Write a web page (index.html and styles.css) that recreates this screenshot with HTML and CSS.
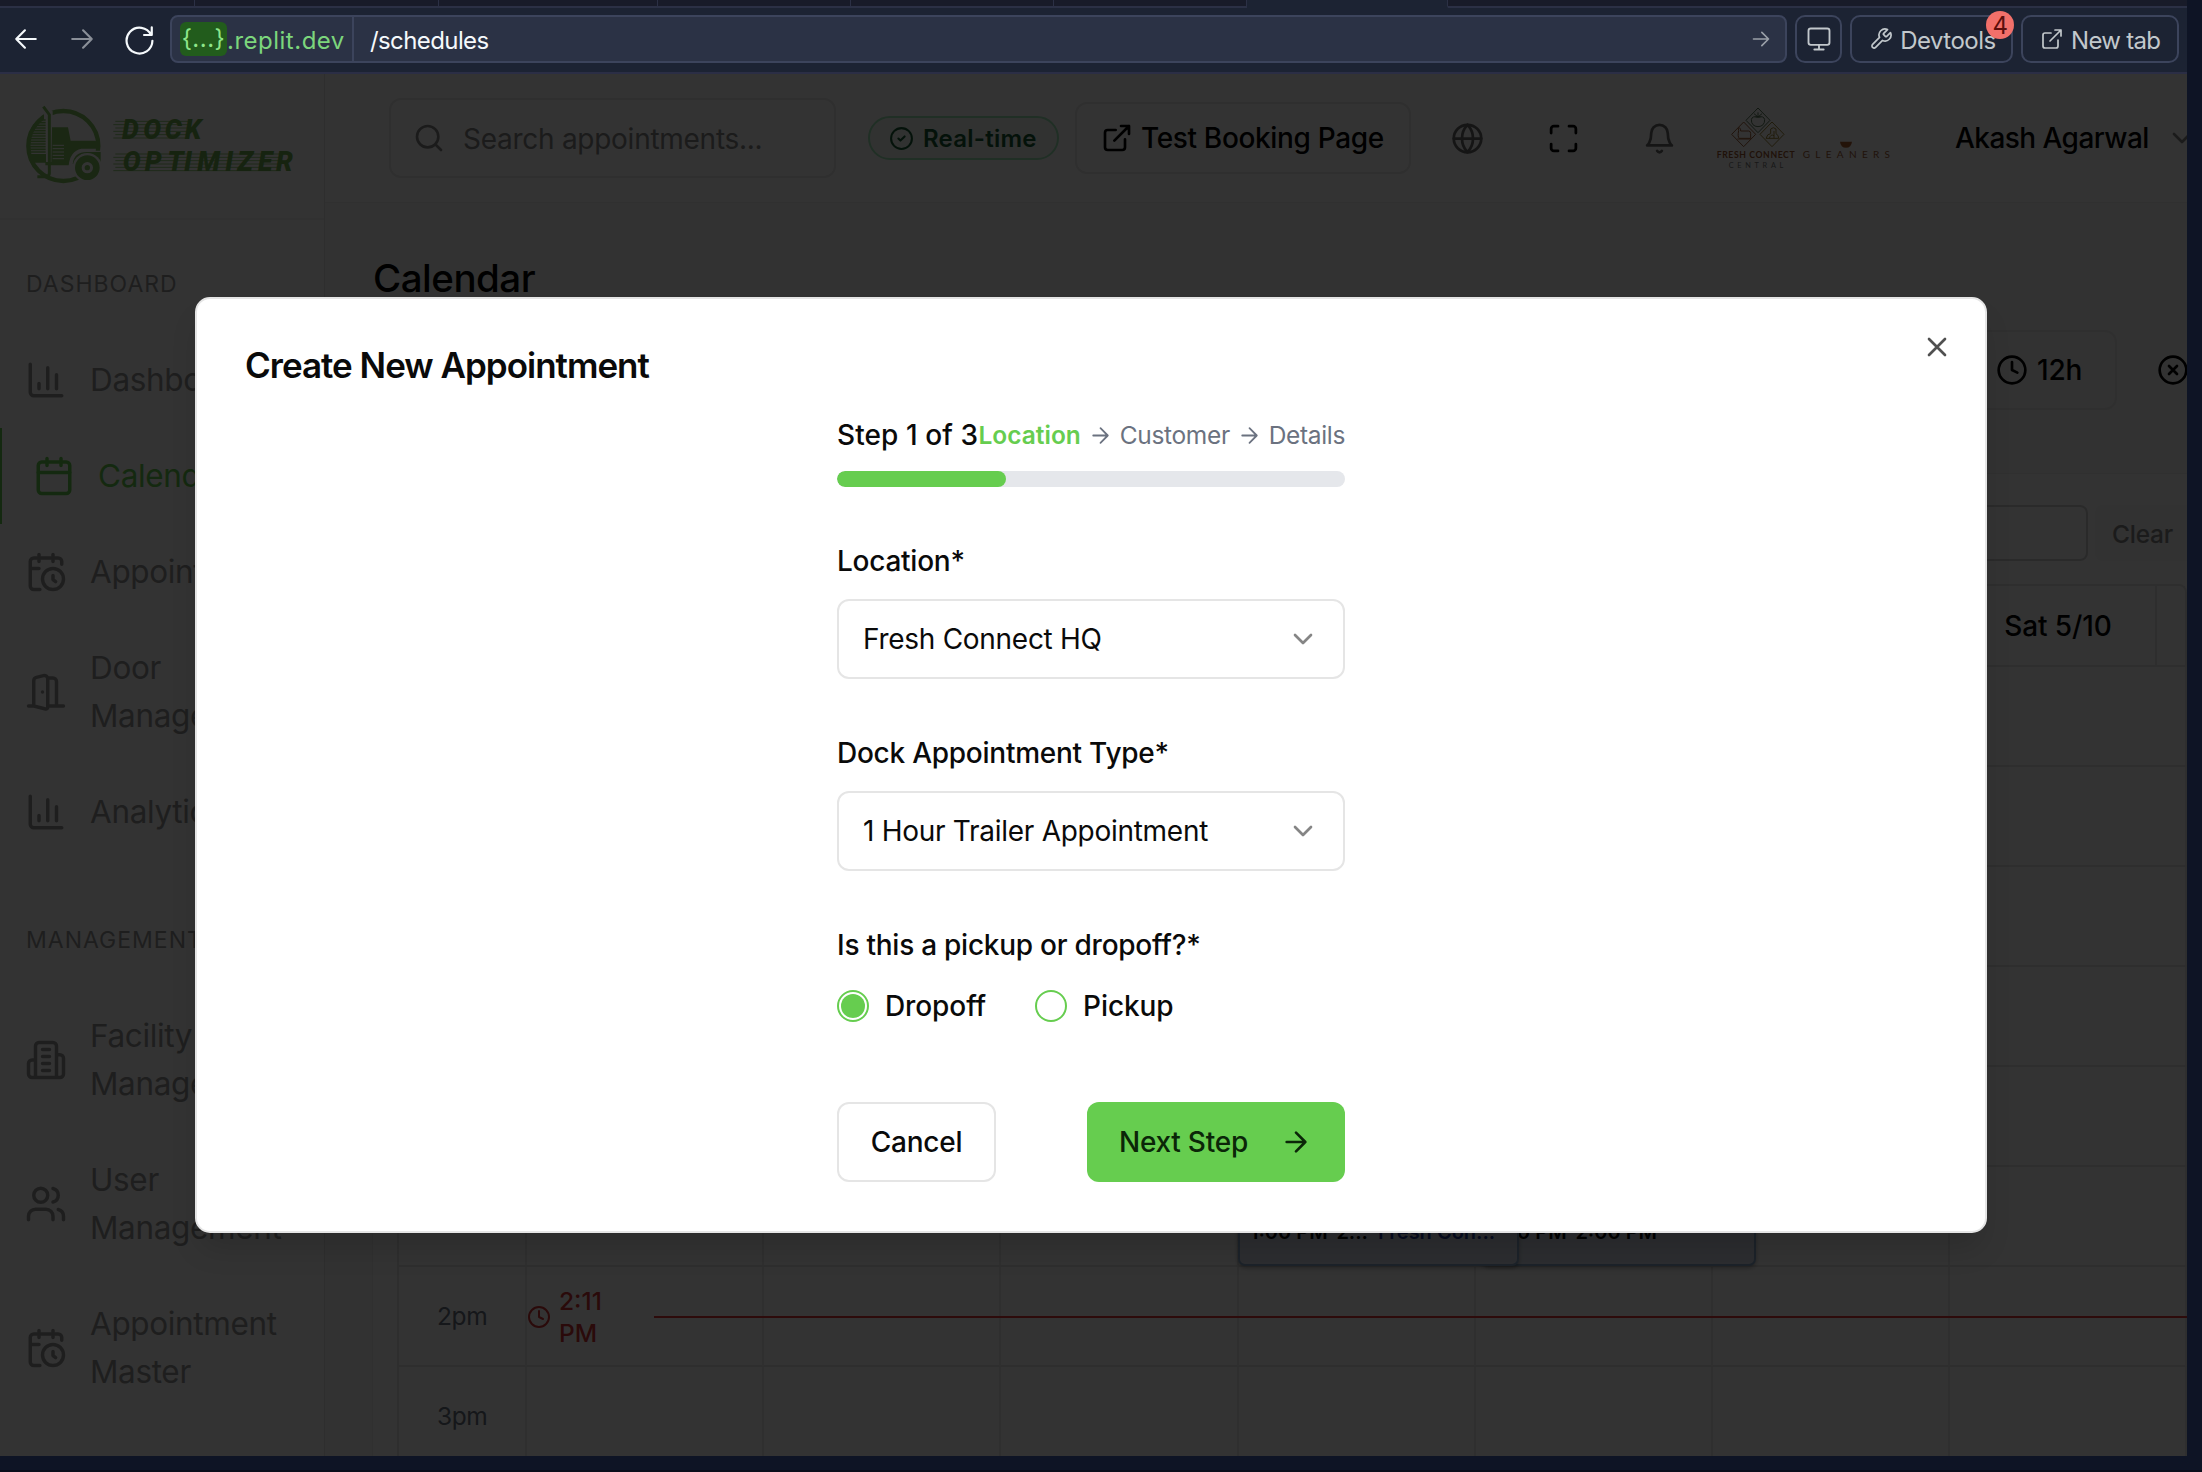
FILE: index.html
```html
<!DOCTYPE html>
<html lang="en">
<head>
<meta charset="utf-8">
<title>Dock Optimizer - Schedules</title>
<link rel="stylesheet" href="styles.css">
</head>
<body>
<svg class="sprite" aria-hidden="true">
  <symbol id="bars" viewBox="0 0 24 24"><path d="M3 3v16a2 2 0 0 0 2 2h16M18 17V9M13 17V5M8 17v-3"/></symbol>
  <symbol id="calendar" viewBox="0 0 24 24"><path d="M8 2v4M16 2v4M3 10h18"/><rect x="3" y="4" width="18" height="18" rx="2"/></symbol>
  <symbol id="calclock" viewBox="0 0 24 24"><path d="M21 7.500V6a2 2 0 0 0-2-2H5a2 2 0 0 0-2 2v14a2 2 0 0 0 2 2h3.500M16 2v4M8 2v4M3 10h5M17.500 17.500 16 16.300V14"/><circle cx="16" cy="16" r="6"/></symbol>
  <symbol id="door" viewBox="0 0 24 24"><path d="M13 4h3a2 2 0 0 1 2 2v14M2 20h3M13 20h9M10 12v.01M13 4.562v16.157a1 1 0 0 1-1.242.97L5 20V5.562a2 2 0 0 1 1.515-1.940l4-1A2 2 0 0 1 13 4.561Z"/></symbol>
  <symbol id="building" viewBox="0 0 24 24"><path d="M6 22V4a2 2 0 0 1 2-2h8a2 2 0 0 1 2 2v18ZM6 12H4a2 2 0 0 0-2 2v6a2 2 0 0 0 2 2h2M18 9h2a2 2 0 0 1 2 2v9a2 2 0 0 1-2 2h-2M10 6h4M10 10h4M10 14h4M10 18h4"/></symbol>
  <symbol id="users" viewBox="0 0 24 24"><path d="M16 21v-2a4 4 0 0 0-4-4H6a4 4 0 0 0-4 4v2M22 21v-2a4 4 0 0 0-3-3.870M16 3.130a4 4 0 0 1 0 7.750"/><circle cx="9" cy="7" r="4"/></symbol>
  <symbol id="search" viewBox="0 0 24 24"><circle cx="11" cy="11" r="8"/><path d="m21 21-4.300-4.300"/></symbol>
  <symbol id="check" viewBox="0 0 24 24"><circle cx="12" cy="12" r="10"/><path d="m9 12 2 2 4-4"/></symbol>
  <symbol id="external" viewBox="0 0 24 24"><path d="M15 3h6v6M10 14 21 3M18 13v6a2 2 0 0 1-2 2H5a2 2 0 0 1-2-2V8a2 2 0 0 1 2-2h6"/></symbol>
  <symbol id="globe" viewBox="0 0 24 24"><circle cx="12" cy="12" r="10"/><path d="M12 2a14.500 14.500 0 0 0 0 20 14.500 14.500 0 0 0 0-20M2 12h20"/></symbol>
  <symbol id="maximize" viewBox="0 0 24 24"><path d="M8 3H5a2 2 0 0 0-2 2v3M21 8V5a2 2 0 0 0-2-2h-3M3 16v3a2 2 0 0 0 2 2h3M16 21h3a2 2 0 0 0 2-2v-3"/></symbol>
  <symbol id="bell" viewBox="0 0 24 24"><path d="M6 8a6 6 0 0 1 12 0c0 7 3 9 3 9H3s3-2 3-9M10.300 21a1.940 1.940 0 0 0 3.400 0"/></symbol>
  <symbol id="chevron" viewBox="0 0 24 24"><path d="m6 9 6 6 6-6"/></symbol>
  <symbol id="clock" viewBox="0 0 24 24"><circle cx="12" cy="12" r="10"/><path d="M12 6v6l4 2"/></symbol>
  <symbol id="xcircle" viewBox="0 0 24 24"><circle cx="12" cy="12" r="10"/><path d="m15 9-6 6M9 9l6 6"/></symbol>
  <symbol id="x" viewBox="0 0 24 24"><path d="M18 6 6 18M6 6l12 12"/></symbol>
  <symbol id="arrow" viewBox="0 0 24 24"><path d="M5 12h14M12 5l7 7-7 7"/></symbol>
  <symbol id="back" viewBox="0 0 24 24"><path d="M21 12H3M11 4l-8 8 8 8"/></symbol>
  <symbol id="forward" viewBox="0 0 24 24"><path d="M3 12h18M13 4l8 8-8 8"/></symbol>
  <symbol id="reload" viewBox="0 0 24 24"><path d="M21.500 2.500v6h-6M21 8.500A10 10 0 1 0 22 13"/></symbol>
  <symbol id="monitor" viewBox="0 0 24 24"><rect x="3" y="3" width="18" height="14" rx="2"/><path d="M12 17v4M8 21h8"/></symbol>
  <symbol id="wrench" viewBox="0 0 24 24"><path d="M14.700 6.300a1 1 0 0 0 0 1.400l1.600 1.600a1 1 0 0 0 1.400 0l3.770-3.770a6 6 0 0 1-7.940 7.940l-6.910 6.910a2.120 2.120 0 0 1-3-3l6.910-6.910a6 6 0 0 1 7.940-7.940l-3.760 3.760z"/></symbol>
</svg>

<div class="tabstrip">
  <i class="tab t1"></i><i class="tab t2"></i><i class="tab t3"></i><i class="tab t4"></i><i class="tab t5"></i><i class="tab t6"></i><i class="tab active"></i><i class="tab rest"></i>
</div>
<div class="toolbar">
  <svg class="icon nav-back"><use href="#back"/></svg>
  <svg class="icon nav-fwd"><use href="#forward"/></svg>
  <svg class="icon nav-reload"><use href="#reload"/></svg>
  <div class="url">
    <div class="host"><span class="chip">{...}</span><span class="domain">.replit.dev</span></div>
    <span class="path">/schedules</span>
    <svg class="icon go"><use href="#forward"/></svg>
  </div>
  <div class="tool device"><svg class="icon"><use href="#monitor"/></svg></div>
  <div class="tool devtools"><svg class="icon"><use href="#wrench"/></svg><span>Devtools</span><b class="badge">4</b></div>
  <div class="tool newtab"><svg class="icon"><use href="#external"/></svg><span>New tab</span></div>
</div>

<div class="viewport">
  <div class="app">
    <aside class="sidebar">
      <div class="brand">
        <svg class="logo" viewBox="0 0 900 330">
          <circle cx="160" cy="168" r="105" fill="none" stroke="#80c060" stroke-width="13"/>
          <path d="M90 45l32 22v26h-14V70L88 54z" fill="#fff" stroke="#fff" stroke-width="12"/>
          <path d="M100 50l18 24v176q0 10-10 10H82" fill="none" stroke="#80c060" stroke-width="9"/>
          <path d="M85 90h22M76 98h31M70 106h37M65 114h42M62 122h45M59 130h48M57 138h50M56 146h51M55 154h52M55 162h52M55 170h52M55 178h52M55 186h52" stroke="#80c060" stroke-width="5"/>
          <path d="M54 192h54v26H62zM126 112h48l8 40h72q14 2 16 24h-56q-34 8-38 50h-70v-10h18z" fill="#80c060"/>
          <path d="M128 166h34M128 176h34M128 186h34M128 196h34M128 206h34" stroke="#fff" stroke-width="3"/>
          <path d="M186 222q4-38 44-38h44v38" fill="#80c060" stroke="#fff" stroke-width="4"/>
          <circle cx="232" cy="233" r="44" fill="#fff"/>
          <circle cx="232" cy="233" r="27" fill="none" stroke="#80c060" stroke-width="20"/>
          <circle cx="232" cy="233" r="8" fill="#80c060"/>
          <g stroke="#80c060" stroke-width="2.500">
            <path d="M316 94h220M310 104h226M316 114h220M310 124h226M316 134h220M310 144h226"/>
            <path d="M316 192h496M310 202h502M316 212h496M310 222h502M316 232h496M310 242h502"/>
          </g>
          <g class="wordmark">
            <text x="336 400 464 524" y="147">DOCK</text>
            <text x="338 404 472 522 562 646 682 744 798" y="244">OPTIMIZER</text>
          </g>
        </svg>
      </div>
      <h2 class="group">DASHBOARD</h2>
      <nav>
        <a class="item"><svg class="icon"><use href="#bars"/></svg><span>Dashboard</span></a>
        <a class="item current"><svg class="icon"><use href="#calendar"/></svg><span>Calendar</span></a>
        <a class="item"><svg class="icon"><use href="#calclock"/></svg><span>Appointments</span></a>
        <a class="item"><svg class="icon"><use href="#door"/></svg><span>Door Management</span></a>
        <a class="item"><svg class="icon"><use href="#bars"/></svg><span>Analytics</span></a>
      </nav>
      <h2 class="group second">MANAGEMENT</h2>
      <nav>
        <a class="item"><svg class="icon"><use href="#building"/></svg><span>Facility Management</span></a>
        <a class="item"><svg class="icon"><use href="#users"/></svg><span>User Management</span></a>
        <a class="item"><svg class="icon"><use href="#calclock"/></svg><span>Appointment Master</span></a>
      </nav>
    </aside>
    <section class="main">
      <header class="topbar">
        <div class="searchbox"><svg class="icon"><use href="#search"/></svg><span>Search appointments...</span></div>
        <div class="live"><svg class="icon"><use href="#check"/></svg><span>Real-time</span></div>
        <div class="booking"><svg class="icon"><use href="#external"/></svg><span>Test Booking Page</span></div>
        <div class="actions">
          <svg class="icon soft"><use href="#globe"/></svg>
          <svg class="icon"><use href="#maximize"/></svg>
          <svg class="icon soft"><use href="#bell"/></svg>
        </div>
        <svg class="tenant" viewBox="0 0 630 240">
          <g fill="none" stroke-width="3">
            <path d="M174 39l36 37-36 37-36-37z" stroke="#5a7a5a"/>
            <path d="M154 74q2-12 20-8 18-4 20 8 0 20-20 21-20-1-20-21M162 56l12 10 12-10M174 52v14M166 66h16" stroke="#5a7a5a"/>
            <path d="M131 81l36 37-36 37-36-37z" stroke="#a06038"/>
            <path d="M116 106q-4-8 2-8 5 4 4 10h24q6 0 6 8v14h-34q-6-4-2-24M112 132h40" stroke="#a06038"/>
            <path d="M216 81l36 37-36 37-36-37z" stroke="#a08838"/>
            <path d="M198 130q4-14 14-14v-14q8-8 16 0v14q8 4 8 14zM208 130q4-14 14-8M222 108v22" stroke="#a08838"/>
          </g>
          <text class="fc" x="50" y="189" textLength="234">FRESH CONNECT</text>
          <text class="central" x="86" y="219" textLength="164">CENTRAL</text>
          <path d="M420 140h36q-2 18-18 18t-18-18z" fill="#b06030"/>
          <text class="gleaners" x="308" y="188" textLength="262">GLEANERS</text>
        </svg>
        <span class="user">Akash Agarwal</span>
        <svg class="icon caret"><use href="#chevron"/></svg>
      </header>
      <h1 class="title">Calendar</h1>
      <div class="controls">
        <div class="hours"><svg class="icon"><use href="#clock"/></svg><span>12h</span></div>
        <svg class="icon dismiss"><use href="#xcircle"/></svg>
      </div>
      <div class="card">
        <div class="filter"><div class="field"></div><div class="clear">Clear</div></div>
        <div class="schedule">
          <div class="days"><div class="day">Sat 5/10</div></div>
          <div class="grid">
            <div class="row"><time></time><i></i><i></i><i></i><i></i><i></i><i></i><i></i></div>
            <div class="row"><time></time><i></i><i></i><i></i><i></i><i></i><i></i><i></i></div>
            <div class="row"><time></time><i></i><i></i><i></i><i></i><i></i><i></i><i></i></div>
            <div class="row"><time></time><i></i><i></i><i></i><i></i><i></i><i></i><i></i></div>
            <div class="row"><time></time><i></i><i></i><i></i><i></i><i></i><i></i><i></i></div>
            <div class="row"><time></time><i></i><i></i><i></i><i></i><i></i><i></i><i></i></div>
            <div class="row"><time>2pm</time><i></i><i></i><i></i><i></i><i></i><i></i><i></i></div>
            <div class="row"><time>3pm</time><i></i><i></i><i></i><i></i><i></i><i></i><i></i></div>
            <div class="event later"><span>1:00 PM-2:00 PM</span></div>
            <div class="event"><span>1:00 PM-2...</span><em>Fresh Con...</em></div>
            <div class="now"><svg class="icon"><use href="#clock"/></svg><span>2:11 PM</span><hr></div>
          </div>
        </div>
      </div>
    </section>
  </div>
  <div class="overlay"></div>
  <div class="modal">
    <svg class="icon close"><use href="#x"/></svg>
    <h2 class="heading">Create New Appointment</h2>
    <form class="form">
      <div class="steps"><strong>Step 1 of 3</strong><span class="crumbs"><b>Location</b><svg class="icon"><use href="#arrow"/></svg><span>Customer</span><svg class="icon"><use href="#arrow"/></svg><span>Details</span></span></div>
      <div class="progress"><div class="bar"></div></div>
      <label class="label">Location*</label>
      <div class="select"><span>Fresh Connect HQ</span><svg class="icon"><use href="#chevron"/></svg></div>
      <label class="label">Dock Appointment Type*</label>
      <div class="select"><span>1 Hour Trailer Appointment</span><svg class="icon"><use href="#chevron"/></svg></div>
      <label class="label">Is this a pickup or dropoff?*</label>
      <div class="radios">
        <div class="option"><i class="radio on"></i><span>Dropoff</span></div>
        <div class="option"><i class="radio"></i><span>Pickup</span></div>
      </div>
      <div class="buttons">
        <div class="btn cancel">Cancel</div>
        <div class="btn next"><span>Next Step</span><svg class="icon"><use href="#arrow"/></svg></div>
      </div>
    </form>
  </div>
</div>
</body>
</html>
```

FILE: styles.css
```css
* { box-sizing: border-box; }
body {
  margin: 0;
  width: 2202px;
  height: 1472px;
  overflow: hidden;
  background: #0e1425;
  border-bottom: 2px solid #090d1a;
  font-family: Inter, "Liberation Sans", sans-serif;
  font-size: 28px;
  letter-spacing: -.25px;
  color: #0a0a0a;
}
h1, h2 { margin: 0; }
i, em { font-style: normal; }
.sprite { position: absolute; width: 0; height: 0; }
.icon {
  flex: none;
  width: 28px;
  height: 28px;
  fill: none;
  stroke: currentColor;
  stroke-width: 2;
  stroke-linecap: round;
  stroke-linejoin: round;
}

/* browser chrome */
.tabstrip { display: flex; width: 2187px; height: 8px; }
.tab { background: #181b29; border-bottom: 2px solid #2b3045; border-right: 1px solid #2b3045; }
.t1 { width: 195px; }
.t2 { width: 244px; }
.t3 { width: 219px; }
.t4 { width: 193px; }
.t5 { width: 203px; }
.t6 { width: 193px; }
.active { width: 201px; background: #1c2333; border-bottom-color: #1c2333; }
.rest { flex: 1; border-right: 0; }
.toolbar {
  display: flex;
  align-items: center;
  width: 2187px;
  height: 66px;
  padding: 0 8px 2px 13px;
  background: #1c2333;
  border-bottom: 2px solid #2b2e45;
  color: #c2c8cc;
  font-size: 24px;
  letter-spacing: 0;
}
.toolbar span { position: relative; top: 1px; }
.nav-back, .nav-fwd { width: 26px; height: 26px; stroke-width: 2; }
.nav-back { color: #f5f9fc; }
.nav-fwd { margin-left: 30px; color: #8a8f98; }
.nav-reload { width: 31px; height: 31px; margin: 0 15px 0 29px; color: #f5f9fc; stroke-width: 1.700; }
.url {
  display: flex;
  align-items: center;
  width: 1618px;
  height: 48px;
  padding-left: 8px;
  background: #2b3245;
  border: 2px solid #3c445c;
  border-radius: 8px;
}
.host { display: flex; align-items: center; width: 174px; height: 44px; border-right: 2px solid #3c445c; color: #7cd67c; }
.toolbar .chip { top: 0; width: 47px; height: 34px; line-height: 34px; text-align: center; border-radius: 6px; background: #225c1c; color: #8ee68a; letter-spacing: .5px; }
.domain { letter-spacing: .5px; }
.path { margin-left: 16px; color: #f5f9fc; letter-spacing: -.600px; }
.go { width: 20px; height: 20px; margin: 0 14px 0 auto; color: #9aa0a8; }
.tool { display: flex; align-items: center; height: 48px; border: 2px solid #3c445c; border-radius: 10px; }
.device { width: 47px; margin-left: 8px; justify-content: center; }
.device .icon { width: 28px; height: 28px; stroke-width: 1.600; }
.devtools { position: relative; width: 163px; margin-left: 8px; padding-left: 17px; gap: 7px; letter-spacing: -.5px; }
.devtools .icon, .newtab .icon { width: 24px; height: 24px; stroke-width: 1.700; }
.newtab { width: 158px; margin-left: 8px; padding-left: 17px; gap: 7px; letter-spacing: -.700px; }
.badge {
  position: absolute;
  top: -6px;
  right: -3px;
  width: 28px;
  height: 28px;
  border-radius: 50%;
  background: #f2706a;
  color: #5c0e0c;
  font-size: 24px;
  font-weight: 400;
  line-height: 29px;
  text-align: center;
}

/* page shell */
.viewport { position: relative; width: 2187px; height: 1382px; overflow: hidden; background: #fff; }
.app { display: flex; height: 100%; }
.sidebar { flex: none; width: 325px; border-right: 1px solid #e5e5e5; color: #989898; }
.brand { height: 146px; padding: 16px 0 0 10px; border-bottom: 2px solid #f2f2f2; }
.logo { display: block; width: 300px; height: 110px; }
.wordmark { font: italic 900 80px Roboto, sans-serif; letter-spacing: 0; fill: #70b050; }
.group { padding: 47px 0 0 26px; height: 112px; font-size: 23px; line-height: 34px; font-weight: 400; letter-spacing: 1px; }
.group.second { height: 128px; padding-top: 63px; }
.item { display: flex; align-items: center; gap: 23px; padding: 24px 30px 24px 25px; font-size: 31.500px; line-height: 48px; letter-spacing: -.350px; }
.item .icon { width: 42px; height: 42px; }
.item.current { padding-left: 31px; border-left: 2px solid #66cd4f; color: #66cd4f; }
.main { flex: none; width: 1940px; background: #f8f8f8; }
.topbar { display: flex; align-items: center; height: 129px; padding: 0 0 0 64px; background: #fff; border-bottom: 1px solid #ededed; white-space: nowrap; }
.searchbox { display: flex; align-items: center; gap: 18px; width: 447px; height: 80px; padding-left: 22px; border: 2px solid #e8e8e8; border-radius: 12px; color: #888; letter-spacing: -.270px; }
.searchbox span { position: relative; top: 1px; }
.searchbox .icon { width: 32px; height: 32px; }
.live {
  display: flex;
  align-items: center;
  gap: 9px;
  width: 191px;
  height: 44px;
  margin-left: 32px;
  padding-left: 19px;
  border: 2px solid #a0e8b8;
  border-radius: 22px;
  background: #f2fbf5;
  color: #185c34;
  font-size: 24px;
  font-weight: 600;
  letter-spacing: .250px;
}
.live .icon { width: 25px; height: 25px; }
.booking { display: flex; align-items: center; gap: 8px; width: 336px; height: 72px; margin-left: 16px; padding-left: 24px; border: 2px solid #e8e8e8; border-radius: 12px; color: #000; font-weight: 500; letter-spacing: -.350px; }
.booking .icon { width: 32px; height: 32px; }
.actions { display: grid; grid-template-columns: repeat(3, 96px); justify-items: center; margin-left: 8px; color: #000; }
.actions .icon { width: 33px; height: 33px; }
.actions .soft { color: #6c6c6c; }
.tenant { flex: none; width: 210px; height: 80px; margin: -6px 0 0 -7px; letter-spacing: 0; }
.fc { font: 700 26px Lato, sans-serif; fill: #9c5830; }
.central { font: 400 22px Lato, sans-serif; fill: #777; }
.gleaners { font: 400 30px Lato, sans-serif; fill: #a06038; }
.user { width: 194px; margin-left: 45px; color: #000; font-weight: 500; letter-spacing: -.550px; }
.caret { margin-left: 17px; color: #888; width: 32px; height: 32px; }
.title { padding: 51px 0 0 48px; height: 127px; font-size: 38.500px; line-height: 48px; font-weight: 500; letter-spacing: -.500px; color: #000; }
.controls { display: flex; align-items: center; justify-content: flex-end; height: 80px; gap: 40px; padding-right: 76px; color: #000; font-weight: 500; }
.controls .icon { width: 32px; height: 32px; }
.hours { display: flex; align-items: center; gap: 9px; width: 200px; height: 80px; justify-content: flex-end; padding-right: 33px; border: 2px solid #eaeaea; border-radius: 12px; }

/* schedule */
.card { margin: 63px 0 0 47px; width: 1880px; height: 990px; padding: 31px 0 0 24px; background: #fff; border: 1px solid #f0f0f0; }
.filter { display: flex; gap: 7px; padding-left: 1290px; }
.field { width: 401px; height: 56px; border: 2px solid #d0d0d0; border-radius: 8px; }
.clear { flex: 1; height: 56px; padding-left: 17px; line-height: 58px; border-radius: 8px; background: #f8f8f8; color: #888; font-size: 24.500px; font-weight: 500; }
.schedule { width: 1790px; margin-top: 23px; border: 2px solid #e6e6e6; border-bottom: 0; border-radius: 8px 8px 0 0; }
.days { display: flex; width: 1758px; height: 79px; border-right: 2px solid #e6e6e6; justify-content: flex-end; }
.day { width: 194px; line-height: 81px; text-align: center; font-weight: 500; color: #000; letter-spacing: -.100px; }
.grid { position: relative; }
.row { display: grid; grid-template-columns: 128px repeat(7, 237.200px); height: 100px; border-top: 2px solid #e6e6e6; }
.row time, .row i { border-right: 2px solid #e8e8e8; }
.row time { padding-left: 38px; line-height: 99px; font-size: 24.500px; color: #6b7280; letter-spacing: -.400px; }
.event {
  position: absolute;
  top: 502px;
  left: 839px;
  display: flex;
  align-items: flex-end;
  gap: 10px;
  width: 281px;
  height: 99px;
  padding: 0 10px 20px;
  border: 2px solid #8caccc;
  border-radius: 7px;
  background: #dbe2f0;
  box-shadow: 0 2px 4px rgba(0, 0, 0, .3);
  color: #000;
  font-size: 20px;
  line-height: 24px;
  font-weight: 600;
  letter-spacing: 0;
  white-space: nowrap;
}
.event em { color: #1e3a9a; }
.event.later { left: 1083px; width: 274px; padding-left: 0; }
.event.later span { margin-left: 5px; }
.now { position: absolute; top: 620px; left: 128px; right: -2px; display: flex; align-items: center; color: #d23232; font-size: 24.500px; line-height: 32px; font-weight: 500; letter-spacing: 0; }
.now .icon { width: 24px; height: 24px; margin-right: 8px; }
.now span { width: 95px; padding-right: 30px; }
.now hr { flex: 1; height: 2px; margin: 0; border: 0; background: #e03838; }

/* dialog */
.overlay { position: absolute; inset: 0; background: rgba(0, 0, 0, .8); }
.modal {
  position: absolute;
  left: 195px;
  top: 223px;
  width: 1792px;
  height: 936px;
  padding: 42px 48px;
  border: 2px solid #e5e5e5;
  border-radius: 15px;
  background: #fff;
  box-shadow: 0 20px 30px -6px rgba(0, 0, 0, .15);
}
.close { position: absolute; right: 32px; top: 32px; width: 32px; height: 32px; color: #505050; }
.heading { font-size: 35px; line-height: 48px; font-weight: 600; letter-spacing: -1px; }
.form { width: 508px; margin: 25px auto 0; }
.steps { display: flex; align-items: center; justify-content: space-between; height: 42px; white-space: nowrap; }
.steps strong { font-weight: 500; letter-spacing: .080px; }
.crumbs { display: flex; align-items: center; gap: 7px; font-size: 24.500px; letter-spacing: -.350px; color: #6b7280; }
.crumbs b { font-weight: 600; letter-spacing: 0; color: #66cd4f; }
.crumbs .icon { width: 25px; height: 25px; stroke-width: 1.700; }
.progress { height: 16px; margin: 15px 0 56px; border-radius: 8px; background: #e5e7eb; overflow: hidden; }
.bar { width: 169px; height: 16px; border-radius: 8px; background: #66cd4f; }
.label { display: block; height: 56px; line-height: 36px; font-weight: 500; }
.select { display: flex; align-items: center; justify-content: space-between; height: 80px; margin-bottom: 56px; padding: 0 24px; border: 2px solid #e5e5e5; border-radius: 12px; letter-spacing: -.280px; }
.select .icon { width: 32px; height: 32px; color: #858585; }
.radios { display: flex; gap: 49px; margin-top: 7px; }
.option { display: flex; align-items: center; gap: 16px; height: 32px; font-weight: 500; letter-spacing: -.100px; }
.radio { width: 32px; height: 32px; border: 2px solid #66cd4f; border-radius: 50%; }
.radio.on { padding: 2px; background: #66cd4f content-box; }
.buttons { display: flex; justify-content: space-between; margin-top: 80px; }
.btn { display: flex; align-items: center; height: 80px; border-radius: 12px; font-weight: 500; }
.cancel { width: 159px; justify-content: center; border: 2px solid #e5e5e5; }
.next { width: 258px; padding-left: 32px; gap: 32px; background: #66cd4f; color: #0b2608; }
.next .icon { width: 32px; height: 32px; margin-top: -1px; }
```
